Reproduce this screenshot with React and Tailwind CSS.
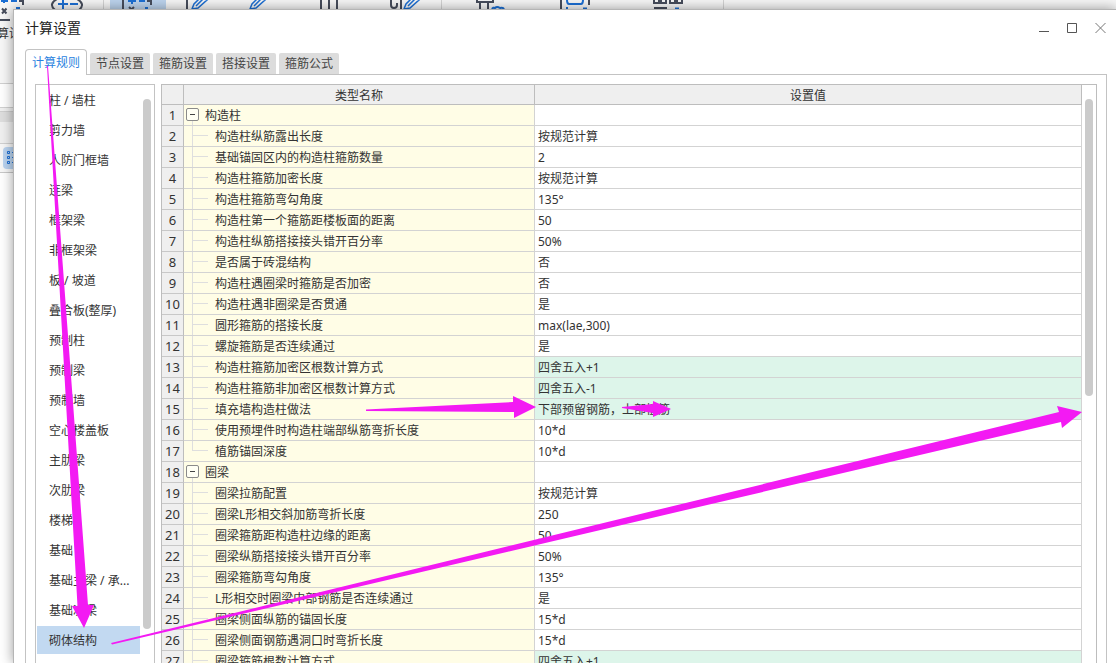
import { useState } from 'react';

const tabs = ['计算规则', '节点设置', '箍筋设置', '搭接设置', '箍筋公式'];

const components = [
  '柱 / 墙柱', '剪力墙', '人防门框墙', '连梁', '框架梁', '非框架梁', '板 / 坡道',
  '叠合板(整厚)', '预制柱', '预制梁', '预制墙', '空心楼盖板', '主肋梁', '次肋梁',
  '楼梯', '基础', '基础主梁 / 承...', '基础次梁', '砌体结构',
];

const groups = [
  {
    name: '构造柱',
    rows: [
      ['构造柱纵筋露出长度', '按规范计算'],
      ['基础锚固区内的构造柱箍筋数量', '2'],
      ['构造柱箍筋加密长度', '按规范计算'],
      ['构造柱箍筋弯勾角度', '135°'],
      ['构造柱第一个箍筋距楼板面的距离', '50'],
      ['构造柱纵筋搭接接头错开百分率', '50%'],
      ['是否属于砖混结构', '否'],
      ['构造柱遇圈梁时箍筋是否加密', '否'],
      ['构造柱遇非圈梁是否贯通', '是'],
      ['圆形箍筋的搭接长度', 'max(lae,300)'],
      ['螺旋箍筋是否连续通过', '是'],
      ['构造柱箍筋加密区根数计算方式', '四舍五入+1', true],
      ['构造柱箍筋非加密区根数计算方式', '四舍五入-1', true],
      ['填充墙构造柱做法', '下部预留钢筋，上部植筋', true],
      ['使用预埋件时构造柱端部纵筋弯折长度', '10*d'],
      ['植筋锚固深度', '10*d'],
    ],
  },
  {
    name: '圈梁',
    open: true,
    rows: [
      ['圈梁拉筋配置', '按规范计算'],
      ['圈梁L形相交斜加筋弯折长度', '250'],
      ['圈梁箍筋距构造柱边缘的距离', '50'],
      ['圈梁纵筋搭接接头错开百分率', '50%'],
      ['圈梁箍筋弯勾角度', '135°'],
      ['L形相交时圈梁中部钢筋是否连续通过', '是'],
      ['圈梁侧面纵筋的锚固长度', '15*d'],
      ['圈梁侧面钢筋遇洞口时弯折长度', '15*d'],
      ['圈梁箍筋根数计算方式', '四舍五入+1', true],
    ],
  },
];

const lines = groups.flatMap((group) => [
  { name: group.name, value: '', head: true },
  ...group.rows.map(([name, value, changed], i) => ({
    name,
    value,
    changed,
    last: !group.open && i === group.rows.length - 1,
  })),
]);

const arrows = [
  '47,66 77.5,606 72,606 84,628 94,605 88,605 48,66',
  '366,409.5 513,402 513,396 536,407 514,418 514,412 366,411',
  '622,407 653,404 653,401 671,409 653,417 653,413 622,408',
  '111,643 1059,412 1057,406 1082,412 1062,428 1061,422 112,644.5',
];

function Pencil({ x }) {
  return <path d={`M${x} 9l2-5l8-8l5 4l-9 8zM${x + 4} 6l8-8`} stroke="#1c6fd4" strokeWidth="1.5" />;
}

function RibbonButton({ label, className, children, text }) {
  return (
    <button aria-label={label} className={`flex flex-col items-stretch ${className}`}>
      <svg className="block h-6 w-full" fill="none" stroke="#474d5c" strokeWidth="2">
        {children}
      </svg>
      {text && <span className="-ml-[3px] whitespace-nowrap pt-0.5 text-left text-xs text-[#333]">{text}</span>}
    </button>
  );
}

function Ribbon() {
  return (
    <div className="flex h-[84px] border-b border-[#d0d0d0] bg-[#f7f7f7]">
      <RibbonButton label="计算" className="w-[45px]" text="算设">
        <path d="M19 1h4v4M2 8.5l4.500 5M6.500 8.500l-4.500 5M0 20h10" />
        <path d="M4 0v3M1 1h7M11 1h6M16 8h4" stroke="#1c6fd4" />
      </RibbonButton>
      <RibbonButton label="括号" className="w-[58px]">
        <path d="M12 -1q-9 5 -2 11M32 -1q9 5 2 11" />
        <path d="M13 4h10M18 0v9M25 4h8" stroke="#1c6fd4" />
      </RibbonButton>
      <div className="mr-1.5 w-px bg-[#d4d4d4]" />
      <RibbonButton label="计算设置" className="w-14 bg-[#bdd4ee]">
        <path d="M13 0v9M37 1h4v4M19 7l4 4M24 7l-4 4" />
        <path d="M22 0v4M18 1h8M29 1h6M35 8h3" stroke="#1c6fd4" />
      </RibbonButton>
      <RibbonButton label="编辑" className="w-[62px]">
        <path d="M21 0v9" />
        <Pencil x={26} />
      </RibbonButton>
      <RibbonButton label="修改" className="w-[62px]">
        <Pencil x={22} />
      </RibbonButton>
      <RibbonButton label="对齐" className="w-[76px]">
        <path d="M31 0v9M39 0v9M47 0v9" />
      </RibbonButton>
      <RibbonButton label="重命名" className="w-[75px]">
        <path d="M25 0v5q0 3 3 3q3 0 3-3V3M35 0v9" />
        <Pencil x={38} />
      </RibbonButton>
      <div className="w-px bg-[#d4d4d4]" />
      <RibbonButton label="支座" className="w-[94px]">
        <path d="M34 2h18M35 0v2M51 0v2M38 2v7M46 2v7" />
        <path d="M50 9q1-2 3-1q2-2 5 0q3-1 4 1" stroke="#1c6fd4" />
      </RibbonButton>
      <RibbonButton label="标注" className="w-[94px]">
        <path d="M25 0v9M53 0v5" />
        <path d="M31 0q0 4 2 4h12q2 0 2-4M31 7v2M47 8.500h4" stroke="#1c6fd4" />
      </RibbonButton>
      <RibbonButton label="编号" className="w-[93px]">
        <path d="M24 0v3h12V0M40 0v3h12V0M28 1h4M44 1h4M24 8h13" />
        <path d="M45 8.500h4" stroke="#1c6fd4" />
      </RibbonButton>
      <div className="w-px bg-[#d4d4d4]" />
    </div>
  );
}

function SideStrip() {
  return (
    <div className="flex w-16 flex-col">
      <div className="h-6 border-b border-[#d0d0d0] bg-white" />
      <div className="h-[3px] bg-[#f0f0f0]" />
      <div className="h-[11px] border-t border-[#cfcfcf] bg-[#dedede]" />
      <div className="h-[22px] border-b border-[#d0d0d0] bg-[#f0f0f0]" />
      <div className="border-b border-[#c8c8c8] bg-[#f7f7f7] py-[3px] pl-[3px]">
        <button aria-label="列表" className="block h-[22px] w-8 rounded bg-[#b9d3f0]">
          <svg className="block h-full w-full" fill="none" stroke="#1c6fd4">
            <path d="M4.500 4.500h2v2h-2zM4.500 9.500h2v2h-2zM4.500 14.500h2v2h-2zM9 5.500h10M9 10.500h10M9 15.500h10" />
          </svg>
        </button>
      </div>
    </div>
  );
}

function TitleBar() {
  return (
    <div className="flex h-[39px] items-center justify-between pb-[3px] pl-[11px] pr-[9px]">
      <h1 className="text-sm text-[#222]">计算设置</h1>
      <div className="flex gap-4">
        {[
          ['最小化', 'M0 9.500h10', '#555'],
          ['最大化', 'M.5 1.500h9v9h-9z', '#555'],
          ['关闭', 'M.5 1l10 10M10.500 1l-10 10', '#777'],
        ].map(([label, d, color]) => (
          <button key={label} aria-label={label} className="h-3 w-3">
            <svg className="block h-3 w-3" fill="none" stroke={color}>
              <path d={d} />
            </svg>
          </button>
        ))}
      </div>
    </div>
  );
}

function SettingRow({ line, index }) {
  return (
    <tr className="h-[21px]">
      <td className="border-b border-r border-b-[#c8c8c8] border-r-[#bdbdbd] bg-[#efefef] p-0 text-center text-[13px] leading-5">
        {index + 1}
      </td>
      <td className="border-b border-r border-[#d3d3d3] bg-[#fffde6] p-0">
        {line.head ? (
          <div className="flex h-5 items-center pl-0.5">
            <div className="flex h-full w-[13px] flex-col items-center pt-[3px]">
              <button
                aria-label="折叠"
                className="flex h-[13px] w-[13px] shrink-0 items-center justify-center rounded-xs border border-[#8a8a8a] bg-[#fffff4]"
              >
                <span className="h-px w-[5px] bg-[#444]" />
              </button>
              <span className="w-px grow bg-[#dedede]" />
            </div>
            <span className="pl-1.5 pt-0.5">{line.name}</span>
          </div>
        ) : (
          <div className="flex h-5 items-center pl-2">
            <div className="flex h-full w-4 flex-col">
              <div className="h-2.5 border-b border-l border-[#dedede]" />
              {!line.last && <div className="grow border-l border-[#dedede]" />}
            </div>
            <span className="pl-[7px] pt-0.5">{line.name}</span>
          </div>
        )}
      </td>
      <td className={`border-b border-r border-[#d3d3d3] pb-0 pl-[3px] pr-0 pt-0.5 leading-[18px] ${line.changed ? 'bg-[#ddf5ea]' : 'bg-white'}`}>
        {line.value}
      </td>
    </tr>
  );
}

export default function App() {
  const [tab, setTab] = useState('计算规则');
  const [selected, setSelected] = useState('砌体结构');

  return (
    <div className="relative h-screen overflow-hidden bg-white font-['Noto_Sans','Noto_Sans_CJK_SC',sans-serif] text-xs text-[#333]">
      <Ribbon />
      <SideStrip />

      <div role="dialog" className="absolute bottom-0 left-[13px] right-0 top-[9px] flex flex-col border-l border-t border-[#b5b5b5] bg-white shadow-[0_0_12px_rgba(0,0,0,0.4)]">
        <TitleBar />
        <div className="flex items-end gap-[3px] pl-[11px]">
          {tabs.map((name) => (
            <button
              key={name}
              onClick={() => setTab(name)}
              className={
                name === tab
                  ? 'relative -mb-px h-[26px] w-[62px] rounded-t border border-b-0 border-[#c3c3c3] bg-white pt-px text-[#2b83e0]'
                  : 'h-[21px] w-[60px] rounded-t-xs bg-[#dcdcdc] pt-px text-[#444]'
              }
            >
              {name}
            </button>
          ))}
        </div>

        <div className="ml-[11px] mr-[9px] flex min-h-0 flex-1 gap-1.5 border border-b-0 border-[#c3c3c3] px-[9px] pt-[9px]">
          <div className="flex w-[120px] shrink-0 justify-between overflow-hidden border border-b-0 border-[#c3c3c3] pl-px pr-[3px]">
            <ul className="w-[103px] pt-px">
              {components.map((name) => (
                <li key={name} className="mb-0.5">
                  <button
                    onClick={() => setSelected(name)}
                    className={`h-7 w-full whitespace-nowrap pl-3 pt-0.5 text-left ${name === selected ? 'bg-[#c2d9f1]' : ''}`}
                  >
                    {name}
                  </button>
                </li>
              ))}
            </ul>
            <div className="mt-3.5 h-[530px] w-2 rounded-full bg-[#cbcbcb]" />
          </div>

          <div className="flex min-w-0 flex-1 overflow-hidden border border-b-0 border-[#bdbdbd]">
            <div className="min-w-0 flex-1">
              <table className="w-full table-fixed border-separate border-spacing-0">
                <thead>
                  <tr className="h-5 bg-[#efefef]">
                    <th className="w-[22px] border-b border-r border-[#bdbdbd] p-0" />
                    <th className="w-[351px] border-b border-r border-[#bdbdbd] px-0 pb-0 pt-0.5 font-normal leading-[17px]">类型名称</th>
                    <th className="border-b border-r border-[#bdbdbd] px-0 pb-0 pt-0.5 font-normal leading-[17px]">设置值</th>
                  </tr>
                </thead>
                <tbody>
                  {lines.map((line, i) => (
                    <SettingRow key={line.name} line={line} index={i} />
                  ))}
                </tbody>
              </table>
            </div>
            <div className="ml-[3px] mr-[3px] mt-3.5 h-[297px] w-2 rounded-full bg-[#cbcbcb]" />
          </div>
        </div>
      </div>

      <svg className="pointer-events-none absolute inset-0 h-full w-full" fill="#f31af3">
        {arrows.map((points) => (
          <polygon key={points} points={points} />
        ))}
      </svg>
    </div>
  );
}
